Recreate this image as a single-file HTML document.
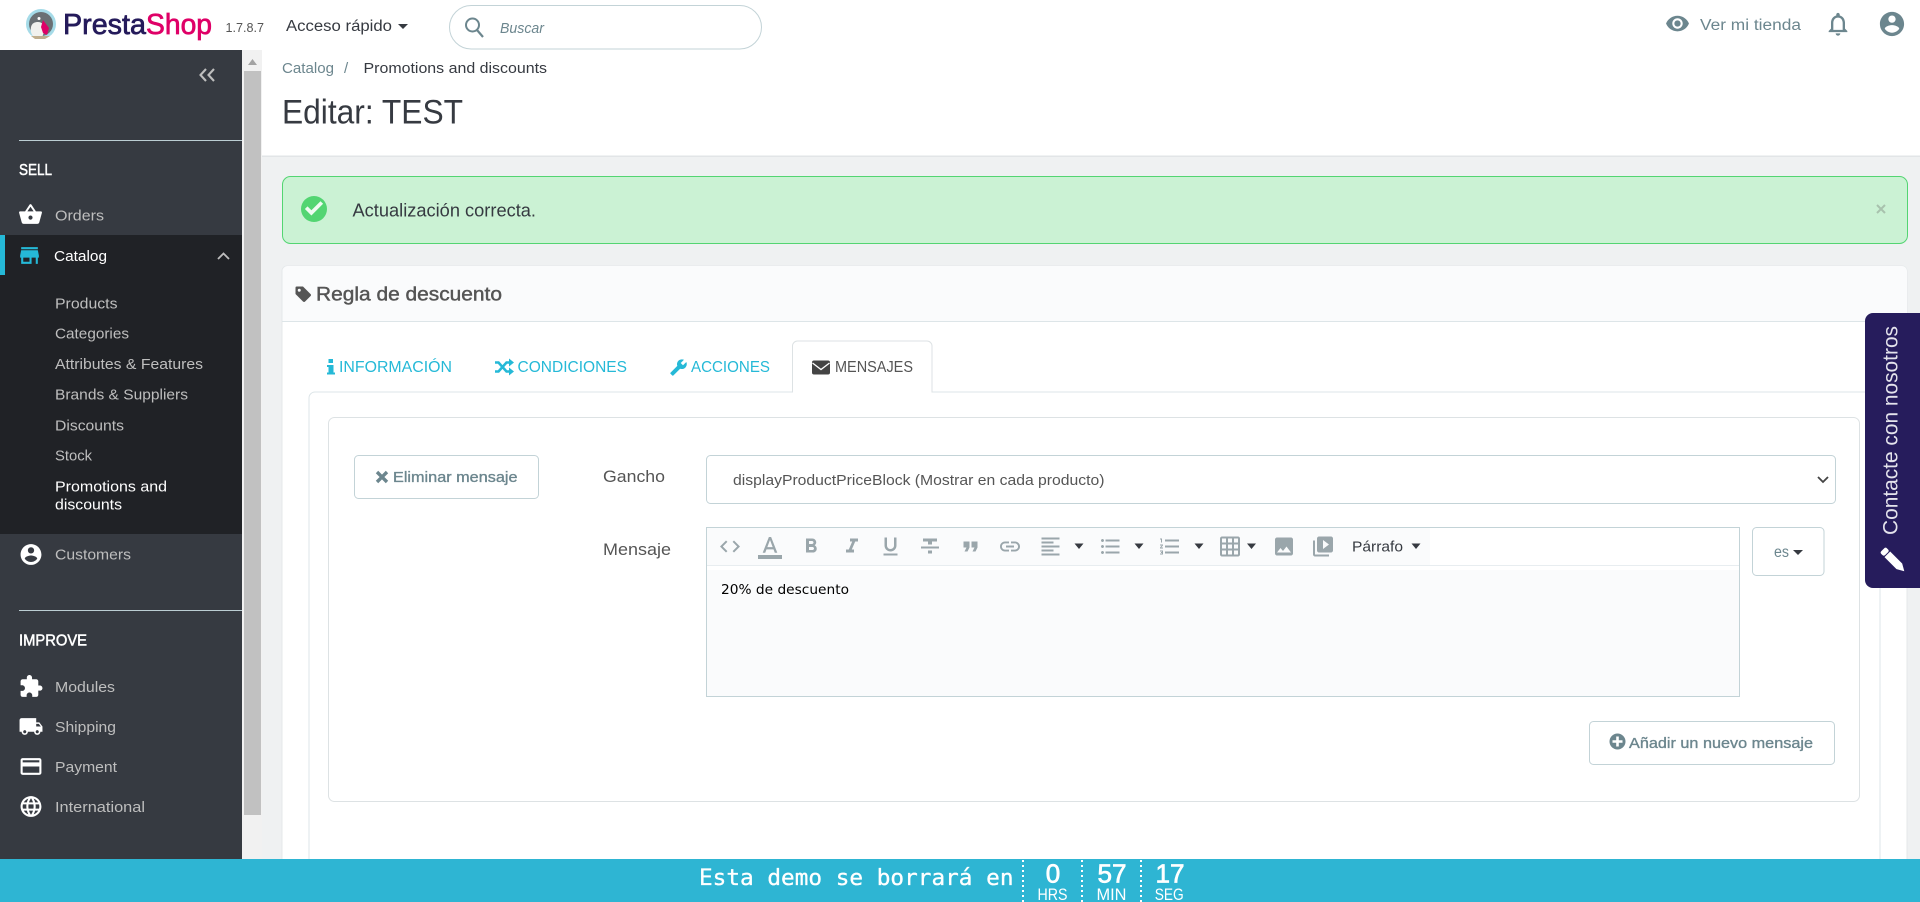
<!DOCTYPE html>
<html lang="es"><head><meta charset="utf-8"><title>Editar: TEST</title>
<style>
html,body{margin:0;padding:0;width:1920px;height:902px;overflow:hidden;background:#fff}
svg{display:block}
text{font-family:"Liberation Sans",sans-serif;white-space:pre}
.s{font-size:15px;fill:#bebebe}
.i{fill:#fff}
.tab{font-size:15.5px;fill:#25b9d7}
.b{font-size:15px;fill:#6c868e;stroke:#6c868e;stroke-width:.35px}
</style></head><body>
<svg width="1920" height="902" viewBox="0 0 1920 902" xmlns="http://www.w3.org/2000/svg">
<rect width="1920" height="902" fill="#fff"/>
<!-- content bg -->
<rect x="262" y="50" width="1658" height="810" fill="#eff1f2"/>
<rect x="262" y="50" width="1658" height="106" fill="#fff"/>
<rect x="262" y="155.500" width="1658" height="1.500" fill="#e2e5e7"/>
<!-- header -->
<g>
<circle cx="41" cy="24" r="15" fill="#a5dbe8"/>
<circle cx="41" cy="24" r="12" fill="#6a7074"/>
<path d="M31 27c1-4 4-5 7-5 4 0 6 3 6 7s-1 7-3 9h-6c-3-2-5-6-4-11z" fill="#f1f1ee"/>
<path d="M43 20l6 8-2 7-4-2-2-6z" fill="#df0067"/>
<circle cx="39" cy="18.500" r="1.500" fill="#fff"/>
<path d="M31 36h19l-5 3H35z" fill="#bfae8e"/>
<text x="63" y="34" font-size="28.500" fill="#251b5b" stroke="#251b5b" stroke-width=".7" textLength="83" lengthAdjust="spacingAndGlyphs">Presta</text>
<text x="146" y="34" font-size="28.500" fill="#df0067" stroke="#df0067" stroke-width=".7" textLength="66" lengthAdjust="spacingAndGlyphs">Shop</text>
<text x="225.500" y="32" font-size="12.500" fill="#555" textLength="38.500" lengthAdjust="spacingAndGlyphs">1.7.8.7</text>
<text x="286" y="31" font-size="15.500" fill="#363a41" textLength="106" lengthAdjust="spacingAndGlyphs">Acceso rápido</text>
<path d="M398 24h10l-5 5z" fill="#363a41"/>
<rect x="449.500" y="5.500" width="312" height="43.500" rx="21.700" fill="#fff" stroke="#c3d3d7"/>
<circle cx="472.500" cy="25" r="6.500" fill="none" stroke="#6c868e" stroke-width="2"/>
<path d="M477 30l6 7" stroke="#6c868e" stroke-width="2.200"/>
<text x="500" y="33" font-size="15" font-style="italic" fill="#6c868e" textLength="44" lengthAdjust="spacingAndGlyphs">Buscar</text>
<svg x="1665" y="11" width="25" height="25" viewBox="0 0 24 24"><path fill="#6c868e" d="M12 4.500C7 4.500 2.730 7.610 1 12c1.730 4.390 6 7.500 11 7.500s9.270-3.110 11-7.500c-1.730-4.390-6-7.500-11-7.500zM12 17c-2.760 0-5-2.240-5-5s2.240-5 5-5 5 2.240 5 5-2.240 5-5 5zm0-8c-1.660 0-3 1.340-3 3s1.340 3 3 3 3-1.340 3-3-1.340-3-3-3z"/></svg>
<text x="1700" y="30" font-size="15.500" fill="#6c868e" textLength="101" lengthAdjust="spacingAndGlyphs">Ver mi tienda</text>
<svg x="1824" y="10" width="28" height="28" viewBox="0 0 24 24"><path fill="#6c868e" d="M12 22c1.100 0 2-.9 2-2h-4c0 1.100.9 2 2 2zm6-6v-5c0-3.070-1.630-5.640-4.500-6.320V4c0-.83-.67-1.500-1.500-1.500s-1.500.67-1.500 1.500v.68C7.640 5.360 6 7.920 6 11v5l-2 2v1h16v-1l-2-2zm-2 1H8v-6c0-2.480 1.510-4.500 4-4.500s4 2.020 4 4.500v6z"/></svg>
<svg x="1877.500" y="9.500" width="29" height="29" viewBox="0 0 24 24"><path fill="#6c868e" d="M12 2C6.480 2 2 6.480 2 12s4.480 10 10 10 10-4.480 10-10S17.520 2 12 2zm0 3c1.660 0 3 1.340 3 3s-1.340 3-3 3-3-1.340-3-3 1.340-3 3-3zm0 14.200c-2.500 0-4.710-1.280-6-3.220.03-1.990 4-3.080 6-3.080 1.990 0 5.970 1.090 6 3.080-1.290 1.940-3.500 3.220-6 3.220z"/></svg>
</g>
<!-- breadcrumb + title -->
<text x="282" y="73" font-size="15" fill="#6c868e" textLength="52" lengthAdjust="spacingAndGlyphs">Catalog</text>
<text x="344" y="73" font-size="15" fill="#6c868e">/</text>
<text x="363.500" y="73" font-size="15" fill="#363a41" textLength="183.500" lengthAdjust="spacingAndGlyphs">Promotions and discounts</text>
<text x="282" y="123.500" font-size="34" fill="#363a41" textLength="181" lengthAdjust="spacingAndGlyphs">Editar: TEST</text>
<!-- sidebar -->
<rect x="0" y="50" width="242" height="810" fill="#363a41"/>
<rect x="242" y="50" width="20" height="810" fill="#f1f1f1"/>
<rect x="244" y="71" width="17" height="744" fill="#c1c1c1"/>
<path d="M252.500 59l4.500 6h-9z" fill="#a3a3a3"/>
<path d="M206 69l-5.500 6 5.500 6M214 69l-5.500 6 5.500 6" fill="none" stroke="#bebebe" stroke-width="2.100"/>
<rect x="19" y="140" width="223" height="1" fill="#bbcdd2"/>
<text x="19" y="175" font-size="15.500" class="i" stroke="#fff" stroke-width=".5" textLength="33" lengthAdjust="spacingAndGlyphs">SELL</text>
<svg x="18" y="202" width="25" height="25" viewBox="0 0 24 24"><path fill="#fff" d="M17.210 9l-4.380-6.560c-.19-.28-.51-.42-.83-.42-.32 0-.64.14-.83.43L6.790 9H2c-.55 0-1 .45-1 1 0 .09.01.18.04.27l2.540 9.270c.23.84 1 1.460 1.920 1.460h13c.92 0 1.690-.62 1.930-1.460l2.540-9.270L23 10c0-.55-.45-1-1-1h-4.790zM9 9l3-4.400L15 9H9zm3 8c-1.100 0-2-.9-2-2s.9-2 2-2 2 .9 2 2-.9 2-2 2z"/></svg>
<text x="55" y="220.500" class="s" textLength="49" lengthAdjust="spacingAndGlyphs">Orders</text>
<rect x="0" y="235" width="242" height="299" fill="#202226"/>
<rect x="0" y="235" width="5" height="40" fill="#25b9d7"/>
<svg x="17" y="243" width="25" height="25" viewBox="0 0 24 24"><path fill="#25b9d7" d="M20 4H4v2h16V4zm1 10v-2l-1-5H4l-1 5v2h1v6h10v-6h4v6h2v-6h1zm-9 4H6v-4h6v4z"/></svg>
<text x="54" y="261" font-size="15" class="i" textLength="53" lengthAdjust="spacingAndGlyphs">Catalog</text>
<path d="M218 259l5.500-5.500 5.500 5.500" fill="none" stroke="#bebebe" stroke-width="1.800"/>
<text x="55" y="308.500" class="s" textLength="62.500" lengthAdjust="spacingAndGlyphs">Products</text>
<text x="55" y="338.700" class="s" textLength="74" lengthAdjust="spacingAndGlyphs">Categories</text>
<text x="55" y="369" class="s" textLength="148" lengthAdjust="spacingAndGlyphs">Attributes &amp; Features</text>
<text x="55" y="399.700" class="s" textLength="133" lengthAdjust="spacingAndGlyphs">Brands &amp; Suppliers</text>
<text x="55" y="430.500" class="s" textLength="69" lengthAdjust="spacingAndGlyphs">Discounts</text>
<text x="55" y="460.500" class="s" textLength="37" lengthAdjust="spacingAndGlyphs">Stock</text>
<text x="55" y="491.300" font-size="15" class="i" textLength="112" lengthAdjust="spacingAndGlyphs">Promotions and</text>
<text x="55" y="509.500" font-size="15" class="i" textLength="67" lengthAdjust="spacingAndGlyphs">discounts</text>
<svg x="18.500" y="542" width="25" height="25" viewBox="0 0 24 24"><path fill="#fff" d="M12 2C6.480 2 2 6.480 2 12s4.480 10 10 10 10-4.480 10-10S17.520 2 12 2zm0 3c1.660 0 3 1.340 3 3s-1.340 3-3 3-3-1.340-3-3 1.340-3 3-3zm0 14.200c-2.500 0-4.710-1.280-6-3.220.03-1.990 4-3.080 6-3.080 1.990 0 5.970 1.090 6 3.080-1.290 1.940-3.500 3.220-6 3.220z"/></svg>
<text x="55" y="559.500" class="s" textLength="76" lengthAdjust="spacingAndGlyphs">Customers</text>
<rect x="19" y="610" width="223" height="1" fill="#bbcdd2"/>
<text x="19" y="645.500" font-size="15.500" class="i" stroke="#fff" stroke-width=".5" textLength="68" lengthAdjust="spacingAndGlyphs">IMPROVE</text>
<svg x="18.500" y="674" width="25" height="25" viewBox="0 0 24 24"><path fill="#fff" d="M20.500 11H19V7c0-1.100-.9-2-2-2h-4V3.500C13 2.120 11.880 1 10.500 1S8 2.120 8 3.500V5H4c-1.100 0-1.990.9-1.990 2v3.800H3.500c1.490 0 2.700 1.210 2.700 2.700s-1.210 2.700-2.700 2.700H2V20c0 1.100.9 2 2 2h3.800v-1.500c0-1.490 1.210-2.700 2.700-2.700 1.490 0 2.700 1.210 2.700 2.700V22H17c1.100 0 2-.9 2-2v-4h1.500c1.380 0 2.500-1.120 2.500-2.500S21.880 11 20.500 11z"/></svg>
<text x="55" y="692" class="s" textLength="60" lengthAdjust="spacingAndGlyphs">Modules</text>
<svg x="18.500" y="714" width="25" height="25" viewBox="0 0 24 24"><path fill="#fff" d="M20 8h-3V4H3c-1.100 0-2 .9-2 2v11h2c0 1.660 1.340 3 3 3s3-1.340 3-3h6c0 1.660 1.340 3 3 3s3-1.340 3-3h2v-5l-3-4zM6 18.500c-.83 0-1.500-.67-1.500-1.500s.67-1.500 1.500-1.500 1.500.67 1.500 1.500-.67 1.500-1.500 1.500zm13.500-9l1.960 2.500H17V9.500h2.500zm-1.500 9c-.83 0-1.500-.67-1.500-1.500s.67-1.500 1.500-1.500 1.500.67 1.500 1.500-.67 1.500-1.500 1.500z"/></svg>
<text x="55" y="732" class="s" textLength="61" lengthAdjust="spacingAndGlyphs">Shipping</text>
<svg x="18.500" y="754" width="25" height="25" viewBox="0 0 24 24"><path fill="#fff" d="M20 4H4c-1.110 0-1.990.89-1.990 2L2 18c0 1.110.89 2 2 2h16c1.110 0 2-.89 2-2V6c0-1.110-.89-2-2-2zm0 14H4v-6h16v6zm0-10H4V6h16v2z"/></svg>
<text x="55" y="772" class="s" textLength="62" lengthAdjust="spacingAndGlyphs">Payment</text>
<svg x="18.500" y="794" width="25" height="25" viewBox="0 0 24 24"><path fill="#fff" d="M11.990 2C6.470 2 2 6.480 2 12s4.470 10 9.990 10C17.520 22 22 17.520 22 12S17.520 2 11.990 2zm6.930 6h-2.950c-.32-1.250-.78-2.450-1.380-3.560 1.840.63 3.370 1.910 4.330 3.560zM12 4.040c.83 1.200 1.480 2.530 1.910 3.960h-3.820c.43-1.430 1.080-2.760 1.910-3.960zM4.260 14C4.100 13.360 4 12.690 4 12s.1-1.360.26-2h3.380c-.08.66-.14 1.320-.14 2 0 .68.06 1.340.14 2H4.260zm.82 2h2.950c.32 1.250.78 2.450 1.380 3.560-1.840-.63-3.370-1.900-4.330-3.560zm2.950-8H5.080c.96-1.660 2.490-2.930 4.330-3.560C8.810 5.550 8.350 6.750 8.030 8zM12 19.960c-.83-1.200-1.480-2.530-1.910-3.960h3.820c-.43 1.430-1.080 2.760-1.910 3.960zM14.340 14H9.660c-.09-.66-.16-1.320-.16-2 0-.68.07-1.350.16-2h4.680c.09.650.16 1.320.16 2 0 .68-.07 1.340-.16 2zm.25 5.560c.6-1.110 1.060-2.310 1.380-3.560h2.950c-.96 1.650-2.490 2.930-4.330 3.560zM16.360 14c.08-.66.14-1.320.14-2 0-.68-.06-1.340-.14-2h3.380c.16.64.26 1.310.26 2s-.1 1.360-.26 2h-3.380z"/></svg>
<text x="55" y="812" class="s" textLength="90" lengthAdjust="spacingAndGlyphs">International</text>
<!-- alert -->
<rect x="282.500" y="176.500" width="1625" height="67" rx="8" fill="#cbf2d4" stroke="#53d572"/>
<svg x="301" y="196" width="26" height="26" viewBox="2 2 20 20"><circle cx="12" cy="12" r="10" fill="#53d572"/><path fill="#f0fbf2" d="M10 17l-5-5 2-2 3 3 7-7 2 2z"/></svg>
<text x="352.500" y="216.500" font-size="18" fill="#363a41" textLength="183.500" lengthAdjust="spacingAndGlyphs">Actualización correcta.</text>
<path d="M1877 205l8 8M1885 205l-8 8" stroke="#a8c2ad" stroke-width="2"/>
<!-- card -->
<rect x="282" y="266" width="1625" height="600" rx="5" fill="#fff" stroke="#e4e8ea"/>
<path d="M282.500 321V271a5 5 0 0 1 5-5H1902a5 5 0 0 1 5 5V321z" fill="#fafbfc"/>
<rect x="282" y="321" width="1625" height="1" fill="#dde5e8"/>
<svg x="294" y="285" width="18" height="18" viewBox="0 0 24 24"><path fill="#555" fill-rule="evenodd" d="M2 3.500A1.500 1.500 0 0 1 3.500 2H12l10 10a2 2 0 0 1 0 2.800L14.800 22a2 2 0 0 1-2.800 0L2 12zM7 5a2 2 0 1 0 0 4 2 2 0 0 0 0-4z"/></svg>
<text x="316" y="300.500" font-size="19.500" fill="#555" stroke="#555" stroke-width=".45" textLength="186" lengthAdjust="spacingAndGlyphs">Regla de descuento</text>
<!-- tabs -->
<path d="M328.500 359h4.500v4h-4.500zM327 365h6.500v7.500h1.500v2H327v-2h1.500v-5.500H327z" fill="#25b9d7"/>
<text x="339" y="372" class="tab" textLength="113" lengthAdjust="spacingAndGlyphs">INFORMACIÓN</text>
<path d="M495 362.500h3.500l8 9h3.500M495 371.500h3.500l8-9h3.500" fill="none" stroke="#25b9d7" stroke-width="2.600"/>
<path d="M509 358.500l5 4-5 4zM509 367.500l5 4-5 4z" fill="#25b9d7"/>
<text x="517.500" y="372" class="tab" textLength="109.500" lengthAdjust="spacingAndGlyphs">CONDICIONES</text>
<svg x="669.500" y="358.500" width="18" height="18" viewBox="0 0 24 24"><g transform="translate(24 0) scale(-1 1)"><path fill="#25b9d7" d="M22.700 19l-9.100-9.100c.9-2.300.4-5-1.500-6.900-2-2-5-2.400-7.400-1.300L9 6 6 9 1.600 4.700C.4 7.100.9 10.100 2.900 12.100c1.900 1.900 4.600 2.400 6.900 1.500l9.100 9.100c.4.4 1 .4 1.400 0l2.300-2.300c.5-.4.5-1.100.1-1.400z"/></g></svg>
<text x="691" y="372" class="tab" textLength="79" lengthAdjust="spacingAndGlyphs">ACCIONES</text>
<!-- tab content -->
<path d="M309 870V398a6 6 0 0 1 6-6h1565V870" fill="#fff" stroke="#dde5e8"/>
<path d="M792.500 392.500V346a5 5 0 0 1 5-5H927a5 5 0 0 1 5 5V392.500" fill="#fff" stroke="#dde2e4"/>
<rect x="793" y="391" width="138.500" height="3" fill="#fff"/>
<rect x="812" y="360.500" width="18" height="14" rx="2" fill="#444"/>
<path d="M812.500 363l8.500 6.500 8.500-6.500" fill="none" stroke="#fff" stroke-width="1.300"/>
<text x="835" y="372" font-size="15.500" fill="#555" textLength="78" lengthAdjust="spacingAndGlyphs">MENSAJES</text>
<!-- panel -->
<rect x="328.500" y="417.500" width="1531" height="384" rx="6" fill="#fff" stroke="#dde2e4"/>
<rect x="354.500" y="455.500" width="184" height="43" rx="4" fill="#fff" stroke="#c3d3d7"/>
<path d="M377 472l10 10M387 472l-10 10" stroke="#6c868e" stroke-width="3.400"/>
<text x="393" y="482" class="b" textLength="124.500" lengthAdjust="spacingAndGlyphs">Eliminar mensaje</text>
<text x="603" y="482" font-size="17" fill="#555" textLength="62" lengthAdjust="spacingAndGlyphs">Gancho</text>
<rect x="706.500" y="455.500" width="1129" height="48" rx="4" fill="#fff" stroke="#c3d3d7"/>
<text x="733" y="485" font-size="15" fill="#555" textLength="371.500" lengthAdjust="spacingAndGlyphs">displayProductPriceBlock (Mostrar en cada producto)</text>
<path d="M1818 477l5 5 5-5" fill="none" stroke="#444" stroke-width="1.800"/>
<text x="603" y="555" font-size="17" fill="#555" textLength="68" lengthAdjust="spacingAndGlyphs">Mensaje</text>
<!-- editor -->
<rect x="706.500" y="527.500" width="1033" height="169" fill="#fff" stroke="#c3d3d7"/>
<rect x="707" y="570" width="1032" height="126" fill="#fafbfc"/>
<rect x="707" y="528" width="723" height="37" fill="#fafbfc"/>
<rect x="707" y="565" width="1032" height="1" fill="#e8edf0"/>
<svg x="718" y="534.500" width="24" height="24" viewBox="0 0 24 24"><path fill="#9aa6ab" d="M9.400 16.600L4.800 12l4.600-4.600L8 6l-6 6 6 6 1.400-1.400zm5.200 0l4.600-4.600-4.600-4.600L16 6l6 6-6 6-1.400-1.400z"/></svg>
<svg x="756.500" y="534.700" width="27" height="27" viewBox="0 0 24 24"><path fill="#9aa6ab" d="M11 2L5.500 16h2.250l1.120-3h6.250l1.120 3h2.250L13 2h-2zm-1.380 9L12 4.670 14.380 11H9.620z"/></svg>
<rect x="758" y="555" width="24" height="4" fill="#9aa6ab"/>
<svg x="799" y="534.500" width="24" height="24" viewBox="0 0 24 24"><path fill="#9aa6ab" d="M15.600 10.790c.97-.67 1.650-1.770 1.650-2.790 0-2.260-1.750-4-4-4H7v14h7.040c2.090 0 3.710-1.700 3.710-3.790 0-1.520-.86-2.820-2.150-3.420zM10 6.500h3c.83 0 1.500.67 1.500 1.500s-.67 1.500-1.500 1.500h-3v-3zm3.500 9H10v-3h3.500c.83 0 1.500.67 1.500 1.500s-.67 1.500-1.500 1.500z"/></svg>
<svg x="840" y="534.500" width="24" height="24" viewBox="0 0 24 24"><path fill="#9aa6ab" d="M10 4v3h2.210l-3.420 8H6v3h8v-3h-2.210l3.420-8H18V4z"/></svg>
<svg x="878.500" y="534.500" width="24" height="24" viewBox="0 0 24 24"><path fill="#9aa6ab" d="M12 17c3.310 0 6-2.690 6-6V3h-2.500v8c0 1.930-1.570 3.500-3.500 3.500S8.500 12.930 8.500 11V3H6v8c0 3.310 2.690 6 6 6zm-7 2v2h14v-2H5z"/></svg>
<svg x="918" y="534.500" width="24" height="24" viewBox="0 0 24 24"><path fill="#9aa6ab" d="M10 19h4v-3h-4v3zM5 4v3h5v3h4V7h5V4H5zM3 14h18v-2H3v2z"/></svg>
<svg x="958.500" y="534.500" width="24" height="24" viewBox="0 0 24 24"><path fill="#9aa6ab" d="M6 17h3l2-4V7H5v6h3zm8 0h3l2-4V7h-6v6h3z"/></svg>
<svg x="998" y="534.500" width="24" height="24" viewBox="0 0 24 24"><path fill="#9aa6ab" d="M3.900 12c0-1.710 1.390-3.100 3.100-3.100h4V7H7c-2.760 0-5 2.240-5 5s2.240 5 5 5h4v-1.900H7c-1.710 0-3.100-1.390-3.100-3.100zM8 13h8v-2H8v2zm9-6h-4v1.900h4c1.710 0 3.100 1.390 3.100 3.100s-1.390 3.100-3.100 3.100h-4V17h4c2.760 0 5-2.240 5-5s-2.240-5-5-5z"/></svg>
<svg x="1038.500" y="534.500" width="24" height="24" viewBox="0 0 24 24"><path fill="#9aa6ab" d="M15 15H3v2h12v-2zm0-8H3v2h12V7zM3 13h18v-2H3v2zm0 8h18v-2H3v2zM3 3v2h18V3H3z"/></svg>
<svg x="1098.500" y="534.500" width="24" height="24" viewBox="0 0 24 24"><path fill="#9aa6ab" d="M4 10.500c-.83 0-1.500.67-1.500 1.500s.67 1.500 1.500 1.500 1.500-.67 1.500-1.500-.67-1.500-1.500-1.500zm0-6c-.83 0-1.500.67-1.500 1.500S3.170 7.500 4 7.500 5.500 6.830 5.500 6 4.830 4.500 4 4.500zm0 12c-.83 0-1.500.68-1.500 1.500s.68 1.500 1.500 1.500 1.500-.68 1.500-1.500-.67-1.500-1.500-1.500zM7 19h14v-2H7v2zm0-6h14v-2H7v2zm0-8v2h14V5H7z"/></svg>
<svg x="1158" y="534.500" width="24" height="24" viewBox="0 0 24 24"><path fill="#9aa6ab" d="M2 17h2v.5H3v1h1v.5H2v1h3v-4H2v1zm1-9h1V4H2v1h1v3zm-1 3h1.800L2 13.100v.9h3v-1H3.200L5 10.900V10H2v1zm5-6v2h14V5H7zm0 14h14v-2H7v2zm0-6h14v-2H7v2z"/></svg>
<svg x="1218" y="534.500" width="24" height="24" viewBox="0 0 24 24"><path fill="#9aa6ab" d="M20 2H4c-1.100 0-2 .9-2 2v16c0 1.100.9 2 2 2h16c1.100 0 2-.9 2-2V4c0-1.100-.9-2-2-2zM8 20H4v-4h4v4zm0-6H4v-4h4v4zm0-6H4V4h4v4zm6 12h-4v-4h4v4zm0-6h-4v-4h4v4zm0-6h-4V4h4v4zm6 12h-4v-4h4v4zm0-6h-4v-4h4v4zm0-6h-4V4h4v4z"/></svg>
<svg x="1272" y="534.500" width="24" height="24" viewBox="0 0 24 24"><path fill="#9aa6ab" d="M21 19V5c0-1.100-.9-2-2-2H5c-1.100 0-2 .9-2 2v14c0 1.100.9 2 2 2h14c1.100 0 2-.9 2-2zM8.500 13.500l2.500 3.010L14.500 12l4.500 6H5l3.500-4.500z"/></svg>
<svg x="1311" y="534.500" width="24" height="24" viewBox="0 0 24 24"><path fill="#9aa6ab" d="M4 6H2v14c0 1.100.9 2 2 2h14v-2H4V6zm16-4H8c-1.100 0-2 .9-2 2v12c0 1.100.9 2 2 2h12c1.100 0 2-.9 2-2V4c0-1.100-.9-2-2-2zm-8 12.500v-9l6 4.500-6 4.500z"/></svg>
<g fill="#363a41">
<path d="M1074.500 543.500h9l-4.500 5.500z"/><path d="M1134.500 543.500h9l-4.500 5.500z"/><path d="M1194.500 543.500h9l-4.500 5.500z"/><path d="M1247 543.500h9l-4.500 5.500z"/><path d="M1411.500 543.500h9l-4.500 5.500z"/>
</g>
<text x="1352" y="551.500" font-size="15" fill="#363a41" textLength="51" lengthAdjust="spacingAndGlyphs">Párrafo</text>
<text x="721" y="594" font-size="13.500" fill="#000" style="font-family:'DejaVu Sans',sans-serif" textLength="128" lengthAdjust="spacingAndGlyphs">20% de descuento</text>
<!-- es -->
<rect x="1752.500" y="527.500" width="71.500" height="48" rx="4" fill="#fff" stroke="#c3d3d7"/>
<text x="1774" y="557" font-size="15.500" fill="#6c868e" textLength="15" lengthAdjust="spacingAndGlyphs">es</text>
<path d="M1793 550h10l-5 5z" fill="#363a41"/>
<!-- add -->
<rect x="1589.500" y="721.500" width="245" height="43" rx="4" fill="#fff" stroke="#c3d3d7"/>
<circle cx="1617.500" cy="741.500" r="8" fill="#6c868e"/>
<path d="M1617.500 736.500v10M1612.500 741.500h10" stroke="#fff" stroke-width="2.600"/>
<text x="1629" y="748" class="b" textLength="184" lengthAdjust="spacingAndGlyphs">Añadir un nuevo mensaje</text>
<!-- contact tab -->
<path d="M1920 313h-47a8 8 0 0 0-8 8v259a8 8 0 0 0 8 8h47z" fill="#261c5c"/>
<text transform="translate(1897.500 535) rotate(-90)" font-size="21" fill="#e4e3ec" textLength="209" lengthAdjust="spacingAndGlyphs">Contacte con nosotros</text>
<g transform="translate(1884.500 551.500) rotate(45)" fill="#fff">
<rect x="-2.500" y="-4" width="5.500" height="8" rx="2"/>
<path d="M4 -4H21L28 0 21 4H4z"/>
</g>
<!-- demo bar -->
<rect x="0" y="859" width="1920" height="43" fill="#2eb5d3"/>
<text x="699" y="885" font-size="22" fill="#fff" stroke="#fff" stroke-width=".3" style="font-family:'DejaVu Sans Mono','Liberation Mono',monospace" textLength="314.500" lengthAdjust="spacingAndGlyphs">Esta demo se borrará en</text>
<g stroke="#fff" stroke-width="2" stroke-dasharray="2 3">
<path d="M1023 860v42M1082 860v42M1141 860v42"/>
</g>
<g fill="#fff" stroke="#fff" stroke-width=".7" font-size="26">
<text x="1045.700" y="882.500" textLength="14.500" lengthAdjust="spacingAndGlyphs">0</text>
<text x="1097.500" y="882.500" textLength="29" lengthAdjust="spacingAndGlyphs">57</text>
<text x="1155.500" y="882.500" textLength="29" lengthAdjust="spacingAndGlyphs">17</text>
</g>
<g fill="#fff" font-size="16.500">
<text x="1037.500" y="900" textLength="30" lengthAdjust="spacingAndGlyphs">HRS</text>
<text x="1096.500" y="900" textLength="30" lengthAdjust="spacingAndGlyphs">MIN</text>
<text x="1154.700" y="900" textLength="29" lengthAdjust="spacingAndGlyphs">SEG</text>
</g>
</svg>
</body></html>
